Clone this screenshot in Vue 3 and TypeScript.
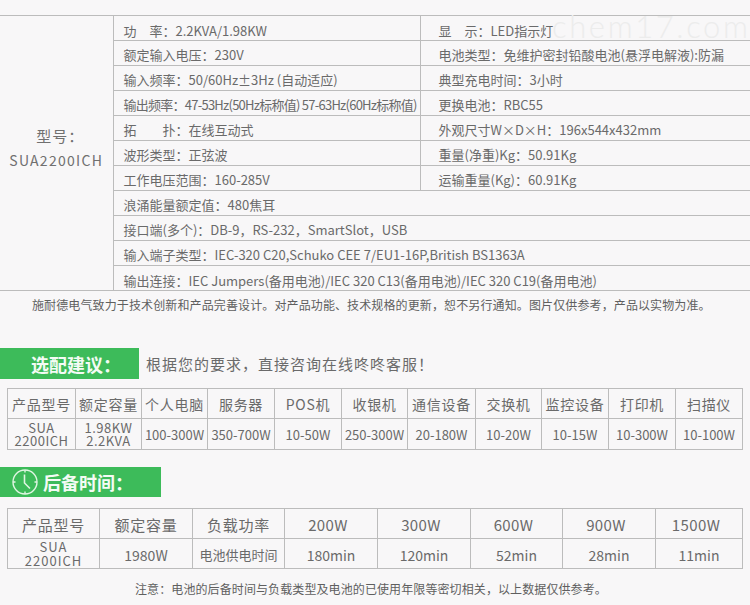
<script setup lang="ts">
interface SpecRow { a: string; b?: string; tight?: boolean }
const specRows: SpecRow[] = [
  { a: '功　率：2.2KVA/1.98KW', b: '显　示：LED指示灯' },
  { a: '额定输入电压：230V', b: '电池类型：免维护密封铅酸电池(悬浮电解液):防漏' },
  { a: '输入频率：50/60Hz±3Hz (自动适应)', b: '典型充电时间：3小时' },
  { a: '输出频率：47-53Hz(50Hz标称值) 57-63Hz(60Hz标称值)', b: '更换电池：RBC55', tight: true },
  { a: '拓　　扑：在线互动式', b: '外观尺寸W×D×H：196x544x432mm' },
  { a: '波形类型：正弦波', b: '重量(净重)Kg：50.91Kg' },
  { a: '工作电压范围：160-285V', b: '运输重量(Kg)：60.91Kg' },
  { a: '浪涌能量额定值：480焦耳' },
  { a: '接口端(多个)：DB-9，RS-232，SmartSlot，USB' },
  { a: '输入端子类型：IEC-320 C20,Schuko CEE 7/EU1-16P,British BS1363A' },
  { a: '输出连接：IEC Jumpers(备用电池)/IEC 320 C13(备用电池)/IEC 320 C19(备用电池)' },
]
const w1 = [68, 66, 66, 67, 67, 66, 68, 66, 67, 67, 67]
const head1 = ['产品型号', '额定容量', '个人电脑', '服务器', 'POS机', '收银机', '通信设备', '交换机', '监控设备', '打印机', '扫描仪']
const body1 = ['100-300W', '350-700W', '10-50W', '250-300W', '20-180W', '10-20W', '10-15W', '10-300W', '10-100W']
const w2 = [92, 93, 92, 93, 93, 92, 93, 87]
const head2 = ['产品型号', '额定容量', '负载功率', '200W', '300W', '600W', '900W', '1500W']
const body2 = ['1980W', '电池供电时间', '180min', '120min', '52min', '28min', '11min']
</script>

<template>
  <div class="page">
    <span class="watermark">chem17.com</span>

    <table class="spec">
      <colgroup>
        <col style="width: 113px" />
        <col style="width: 307px" />
        <col style="width: 330px" />
      </colgroup>
      <tbody>
        <tr v-for="(r, i) in specRows" :key="i">
          <td v-if="i === 0" class="model" :rowspan="specRows.length">
            <div class="model-label">型号：</div>
            <div class="model-name">SUA2200ICH</div>
          </td>
          <td :colspan="r.b ? 1 : 2" class="cell" :class="{ tight: r.tight }">{{ r.a }}</td>
          <td v-if="r.b" class="cell cell-right">{{ r.b }}</td>
        </tr>
      </tbody>
    </table>

    <p class="disclaimer">施耐德电气致力于技术创新和产品完善设计。对产品功能、技术规格的更新，恕不另行通知。图片仅供参考，产品以实物为准。</p>

    <div class="section section-one">
      <div class="tag tag-one">选配建议：</div>
      <span class="tagline">根据您的要求，直接咨询在线咚咚客服！</span>
    </div>

    <table class="grid grid-one">
      <colgroup>
        <col v-for="(w, i) in w1" :key="i" :style="{ width: w + 'px' }" />
      </colgroup>
      <tbody>
        <tr class="head-one">
          <th v-for="h in head1" :key="h">{{ h }}</th>
        </tr>
        <tr class="body-one">
          <td class="stack">SUA<br />2200ICH</td>
          <td class="stack">1.98KW<br />2.2KVA</td>
          <td v-for="(b, i) in body1" :key="i">{{ b }}</td>
        </tr>
      </tbody>
    </table>

    <div class="section section-two">
      <div class="tag tag-two">
        <svg class="clock" width="28" height="28" viewBox="0 0 28 28" fill="none" stroke="#dff5e2" stroke-width="1.4">
          <circle cx="14" cy="14" r="12" />
          <path d="M13.5 6.5V15L19 20.5" stroke-width="1.6" />
          <path d="M14 2V4.5M14 23.5V26M2 14H4.5M23.5 14H26" />
        </svg>
        <span>后备时间：</span>
      </div>
    </div>

    <table class="grid grid-two">
      <colgroup>
        <col v-for="(w, i) in w2" :key="i" :style="{ width: w + 'px' }" />
      </colgroup>
      <tbody>
        <tr class="head-two">
          <th v-for="(h, i) in head2" :key="h" :class="{ watt: i > 2 }">{{ h }}</th>
        </tr>
        <tr class="body-two">
          <td class="stack spaced">SUA<br />2200ICH</td>
          <td v-for="(b, i) in body2" :key="i" :class="{ small: i === 1 }">{{ b }}</td>
        </tr>
      </tbody>
    </table>

    <p class="note">注意：电池的后备时间与负载类型及电池的已使用年限等密切相关，以上数据仅供参考。</p>
  </div>
</template>

<style>
html,
body {
  margin: 0;
  background: #f8f7f8;
}
</style>

<style scoped>
.page {
  position: relative;
  width: 750px;
  height: 605px;
  overflow: hidden;
  padding-top: 15px;
  box-sizing: border-box;
  background: #f8f7f8;
  color: #6a6a6a;
  font-family: "Noto Sans CJK SC", "Noto Sans", sans-serif;
}
.watermark {
  position: absolute;
  left: 552px;
  top: 6px;
  font-family: Lato, "Noto Sans", sans-serif;
  font-weight: 300;
  font-size: 31px;
  line-height: 40px;
  letter-spacing: 2.6px;
  color: #ececec;
}
table {
  border-collapse: collapse;
  table-layout: fixed;
}
.spec {
  width: 750px;
  border-top: 1px solid #bcbcbc;
  border-bottom: 1px solid #bcbcbc;
}
.spec td {
  padding: 0;
}
.model {
  text-align: center;
  vertical-align: middle;
  padding-bottom: 10px !important;
  border-right: 1px solid #bcbcbc;
  color: #707070;
}
.model-label {
  font-size: 15px;
  line-height: 24px;
  letter-spacing: 1px;
  text-indent: 8px;
}
.model-name {
  font-size: 14px;
  line-height: 24px;
  letter-spacing: 1.3px;
}
.cell {
  height: 23px;
  box-sizing: content-box;
  padding: 0 0 1px 10px !important;
  font-size: 13px;
  line-height: 18px;
  vertical-align: bottom;
  white-space: nowrap;
  overflow: visible;
  border-bottom: 1px solid #bcbcbc;
}
.tight {
  letter-spacing: -0.75px;
}
tr:first-child > .cell,
tr:last-child > .cell {
  padding-bottom: 0 !important;
  height: 24px;
}
tr:last-child > .cell {
  border-bottom: none;
}
.cell-right {
  padding-left: 18px !important;
  border-left: 1px solid #bcbcbc;
}
.disclaimer {
  margin: 5px 0 0;
  padding-left: 32px;
  font-size: 12px;
  line-height: 18px;
  letter-spacing: 0.12px;
  white-space: nowrap;
  color: #5f5f5f;
}
.section {
  display: flex;
  align-items: center;
}
.section-one {
  margin-top: 34px;
  gap: 7px;
}
.section-two {
  margin-top: 16px;
}
.tag {
  display: flex;
  align-items: center;
  background: #3dbb5a;
  color: #f4fbf5;
  font-weight: 700;
  font-size: 18px;
  box-sizing: border-box;
}
.tag-one {
  width: 139px;
  height: 31px;
  padding-left: 31px;
}
.tag-two {
  width: 161px;
  height: 30px;
  padding-left: 11px;
  gap: 4px;
}
.clock {
  flex: none;
}
.tagline {
  font-size: 15px;
  letter-spacing: 1px;
  color: #6a6a6a;
  white-space: nowrap;
}
.grid {
  margin-left: 7px;
  width: 735px;
  border: 1px solid #bcbcbc;
}
.grid th,
.grid td {
  border: 1px solid #bcbcbc;
  padding: 0;
  text-align: center;
  font-weight: 400;
  white-space: nowrap;
  color: #6a6a6a;
}
.grid-one {
  margin-top: 9px;
}
.grid-two {
  margin-top: 11px;
}
.head-one th {
  height: 29px;
  font-size: 14px;
  letter-spacing: 0.7px;
}
.body-one td {
  height: 30px;
  font-size: 13px;
}
.head-two th {
  height: 27px;
  padding-top: 2px;
  font-size: 15px;
  letter-spacing: 0.8px;
}
.head-two th.watt {
  padding-right: 6px;
  letter-spacing: 0.4px;
}
.body-two td {
  height: 27px;
  padding-top: 2px;
  font-size: 14px;
}
.body-two td.small {
  font-size: 13px;
}
.grid td.stack {
  font-size: 13px;
  line-height: 13px;
  letter-spacing: 0.5px;
}
.grid td.spaced {
  letter-spacing: 1px;
  line-height: 14px;
  padding-top: 0;
}
.section-two + .grid-two {
  margin-top: 11px;
}
.section-two {
  margin-top: 17px;
}
.note {
  margin: 11px 0 0;
  padding-left: 135px;
  font-size: 12px;
  line-height: 18px;
  letter-spacing: 0.1px;
  white-space: nowrap;
  color: #5f5f5f;
}
</style>
